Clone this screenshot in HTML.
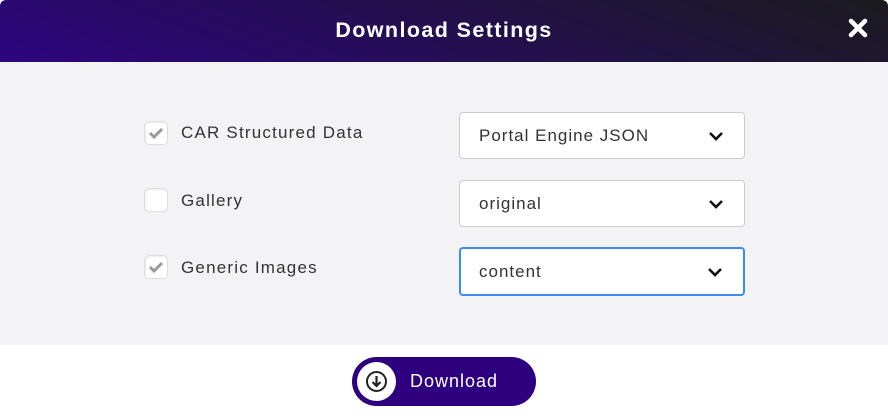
<!DOCTYPE html>
<html><head><style>
*{box-sizing:border-box;margin:0;padding:0}
body{width:888px;height:418px;background:#fff;font-family:"Liberation Sans",sans-serif;position:relative;overflow:hidden}
.hd{position:absolute;left:0;top:0;width:888px;height:62px;border-radius:6px 6px 0 0;background:linear-gradient(200deg,#1b1b1d 0%,#22104a 45%,#2e0580 100%)}
.hd h1{position:absolute;left:0;right:0;top:18px;text-align:center;color:#fff;font-size:21.5px;font-weight:bold;letter-spacing:1.4px}
.x{position:absolute;left:848px;top:18px}
.bd{position:absolute;left:0;top:62px;width:888px;height:283px;background:#f3f3f5}
.cb{position:absolute;left:144px;width:24px;height:24px;border:1px solid #ddd;border-radius:5px;background:#fff;box-shadow:inset 1px 1px 2px rgba(0,0,0,.08)}
.lb{position:absolute;left:181px;font-size:17px;color:#333;letter-spacing:1.2px}
.sel{position:absolute;left:459px;width:286px;height:47px;background:#fff;border:1px solid #ccc;border-radius:4px;font-size:17px;color:#333;padding:13px 0 0 19px;letter-spacing:1px}
.sel svg{position:absolute;right:20px;top:18px}
.btn{position:absolute;left:352px;top:357px;width:184px;height:49px;border-radius:25px;background:#2e0080}
.btn .c{position:absolute;left:5px;top:5px;width:39px;height:39px;border-radius:50%;background:#fff}
.btn span{position:absolute;left:58px;top:14px;color:#fff;font-size:18px;letter-spacing:1px}
</style></head><body>
<div class="hd"><h1>Download Settings</h1>
<svg class="x" width="20" height="20" viewBox="0 0 20 20"><path d="M3 3L17 17M17 3L3 17" stroke="#fff" stroke-width="4.5" stroke-linecap="round"/></svg></div>
<div class="bd"></div>
<div class="cb" style="top:121px"><svg width="22" height="22" viewBox="0 0 22 22"><path d="M5 11l4 4 8-8" stroke="#999" stroke-width="3" fill="none"/></svg></div>
<div class="lb" style="top:123px">CAR Structured Data</div>
<div class="cb" style="top:188px"></div>
<div class="lb" style="top:191px">Gallery</div>
<div class="cb" style="top:255px"><svg width="22" height="22" viewBox="0 0 22 22"><path d="M5 11l4 4 8-8" stroke="#999" stroke-width="3" fill="none"/></svg></div>
<div class="lb" style="top:258px">Generic Images</div>
<div class="sel" style="top:112px">Portal Engine JSON<svg width="16" height="10" viewBox="0 0 16 10"><path d="M2 2l6 6 6-6" stroke="#111" stroke-width="2.6" fill="none"/></svg></div>
<div class="sel" style="top:180px">original<svg width="16" height="10" viewBox="0 0 16 10"><path d="M2 2l6 6 6-6" stroke="#111" stroke-width="2.6" fill="none"/></svg></div>
<div class="sel" style="top:247px;height:49px;border:2px solid #3d8bf0;padding-left:18px">content<svg width="16" height="10" viewBox="0 0 16 10"><path d="M2 2l6 6 6-6" stroke="#111" stroke-width="2.6" fill="none"/></svg></div>
<div class="btn"><div class="c"><svg width="39" height="39" viewBox="0 0 39 39"><circle cx="19.5" cy="19.5" r="9.5" stroke="#222" stroke-width="2" fill="none"/><path d="M19.5 14v10M15.5 20l4 4 4-4" stroke="#222" stroke-width="2.2" fill="none"/></svg></div><span>Download</span></div>
</body></html>
